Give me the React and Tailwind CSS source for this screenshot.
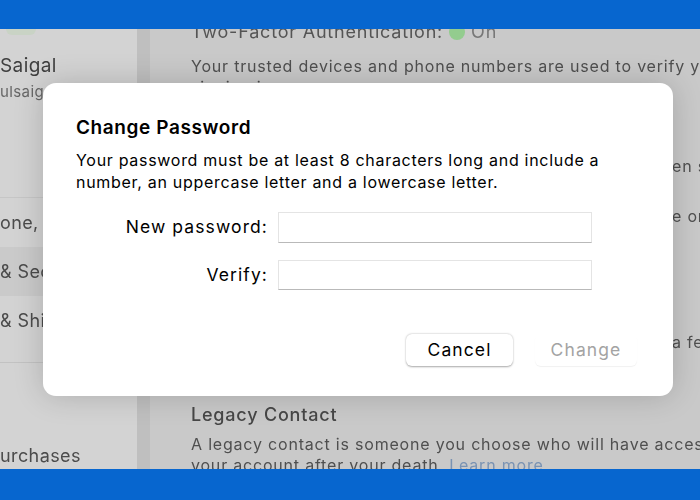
import React from 'react';

const font = { fontFamily: 'Inter, "Noto Sans", sans-serif' };

const SideRow = ({ children, active }) => (
  <div
    className={`h-[49px] flex items-center text-[18px] tracking-[0.4px] text-[#4b4b4b] whitespace-nowrap ${active ? 'bg-[#cacaca]' : ''}`}
  >
    {children}
  </div>
);

export default function App() {
  return (
    <div className="relative w-[700px] h-[500px] overflow-hidden bg-[#c9c9c9]" style={font}>
      <div className="h-[29px] bg-[#0766cf]" />

      <div className="h-[440px] flex overflow-hidden blur-[0.3px]">
        {/* sidebar */}
        <div className="w-[137px] shrink-0 bg-[#d3d3d3] flex flex-col">
          <div className="h-[6px] w-[30px] bg-[#bfd3b8] ml-[6px] rounded-b-full opacity-50" />
          <div className="mt-[19px] text-[19px] leading-[24px] tracking-[0.4px] text-[#3f3f3f]">Saigal</div>
          <div className="mt-[4px] text-[15px] leading-[20px] tracking-[0.4px] text-[#666] whitespace-nowrap">ulsaigal@icloud.com</div>
          <div className="mt-[95px] border-t border-[#c6c6c6]" />
          <SideRow>one, Email</SideRow>
          <SideRow active>&amp; Security</SideRow>
          <SideRow>&amp; Shipping</SideRow>
          <div className="mt-[17px] border-t border-[#c2c2c2]" />
          <div className="mt-[81px] text-[18px] leading-[24px] tracking-[0.4px] text-[#4b4b4b]">urchases</div>
        </div>
        <div className="w-[13px] shrink-0 bg-[#bfbfbf]" />

        {/* main */}
        <div className="flex-1 pl-[41px] text-[#4f4f4f] whitespace-nowrap tracking-[0.8px]">
          <div className="-mt-[9px] text-[18px] leading-[24px] text-[#555] flex items-center gap-[6px]">
            Two-Factor Authentication:
            <span className="inline-block w-[16px] h-[16px] rounded-full bg-[#93cc8e]" />
            <span className="text-[#777]">On</span>
          </div>
          <div className="mt-[12px] text-[16px] leading-[21px]">
            Your trusted devices and phone numbers are used to verify your identity
          </div>
          <div className="text-[16px] leading-[21px]">signing in.</div>
          <div className="mt-[58px] text-[16px] leading-[21px] pl-[481px]">en sign</div>
          <div className="mt-[29px] text-[16px] leading-[21px] pl-[481px]">e on</div>
          <div className="mt-[105px] text-[16px] leading-[21px] pl-[481px]">a few</div>
          <div className="mt-[50px] text-[18px] font-medium leading-[24px] text-[#474747]">Legacy Contact</div>
          <div className="mt-[7px] text-[16px] leading-[21px]">
            A legacy contact is someone you choose who will have access to
          </div>
          <div className="text-[16px] leading-[21px]">
            your account after your death. <span className="text-[#7a93b3]">Learn more...</span>
          </div>
        </div>
      </div>

      <div className="h-[31px] bg-[#0766cf]" />

      {/* modal */}
      <div className="absolute left-[43px] top-[83px] w-[630px] h-[313px] bg-white rounded-[13px] shadow-[0_0_30px_rgba(0,0,0,0.18)] pl-[33px] pr-[36px] pt-[34px] text-black">
        <div className="text-[19px] font-semibold leading-[22px] tracking-[0.6px]">Change Password</div>
        <div className="mt-[10px] text-[16px] leading-[22px] tracking-[0.7px] whitespace-nowrap">
          Your password must be at least 8 characters long and include a
          <br />
          number, an uppercase letter and a lowercase letter.
        </div>

        <div className="mt-[19px] flex items-center">
          <div className="w-[192px] text-right text-[17.5px] tracking-[1.1px]">New password:</div>
          <div className="ml-[10px] w-[314px] h-[31px] border border-[#e4e4e4] border-b-[#b9b9b9]" />
        </div>
        <div className="mt-[17px] flex items-center">
          <div className="w-[192px] text-right text-[17.5px] tracking-[1.1px]">Verify:</div>
          <div className="ml-[10px] w-[314px] h-[30px] border border-[#e4e4e4] border-b-[#b9b9b9]" />
        </div>

        <div className="mt-[44px] flex justify-end gap-[22px]">
          <div className="w-[107px] h-[32px] rounded-[6px] bg-white flex items-center justify-center text-[17.5px] tracking-[1.1px] shadow-[0_0.5px_2px_rgba(0,0,0,0.35)]">
            Cancel
          </div>
          <div className="w-[102px] h-[32px] rounded-[6px] flex items-center justify-center text-[17.5px] tracking-[1.1px] text-[#a3a3a3] shadow-[0_1px_1px_rgba(0,0,0,0.06)]">
            Change
          </div>
        </div>
      </div>
    </div>
  );
}
